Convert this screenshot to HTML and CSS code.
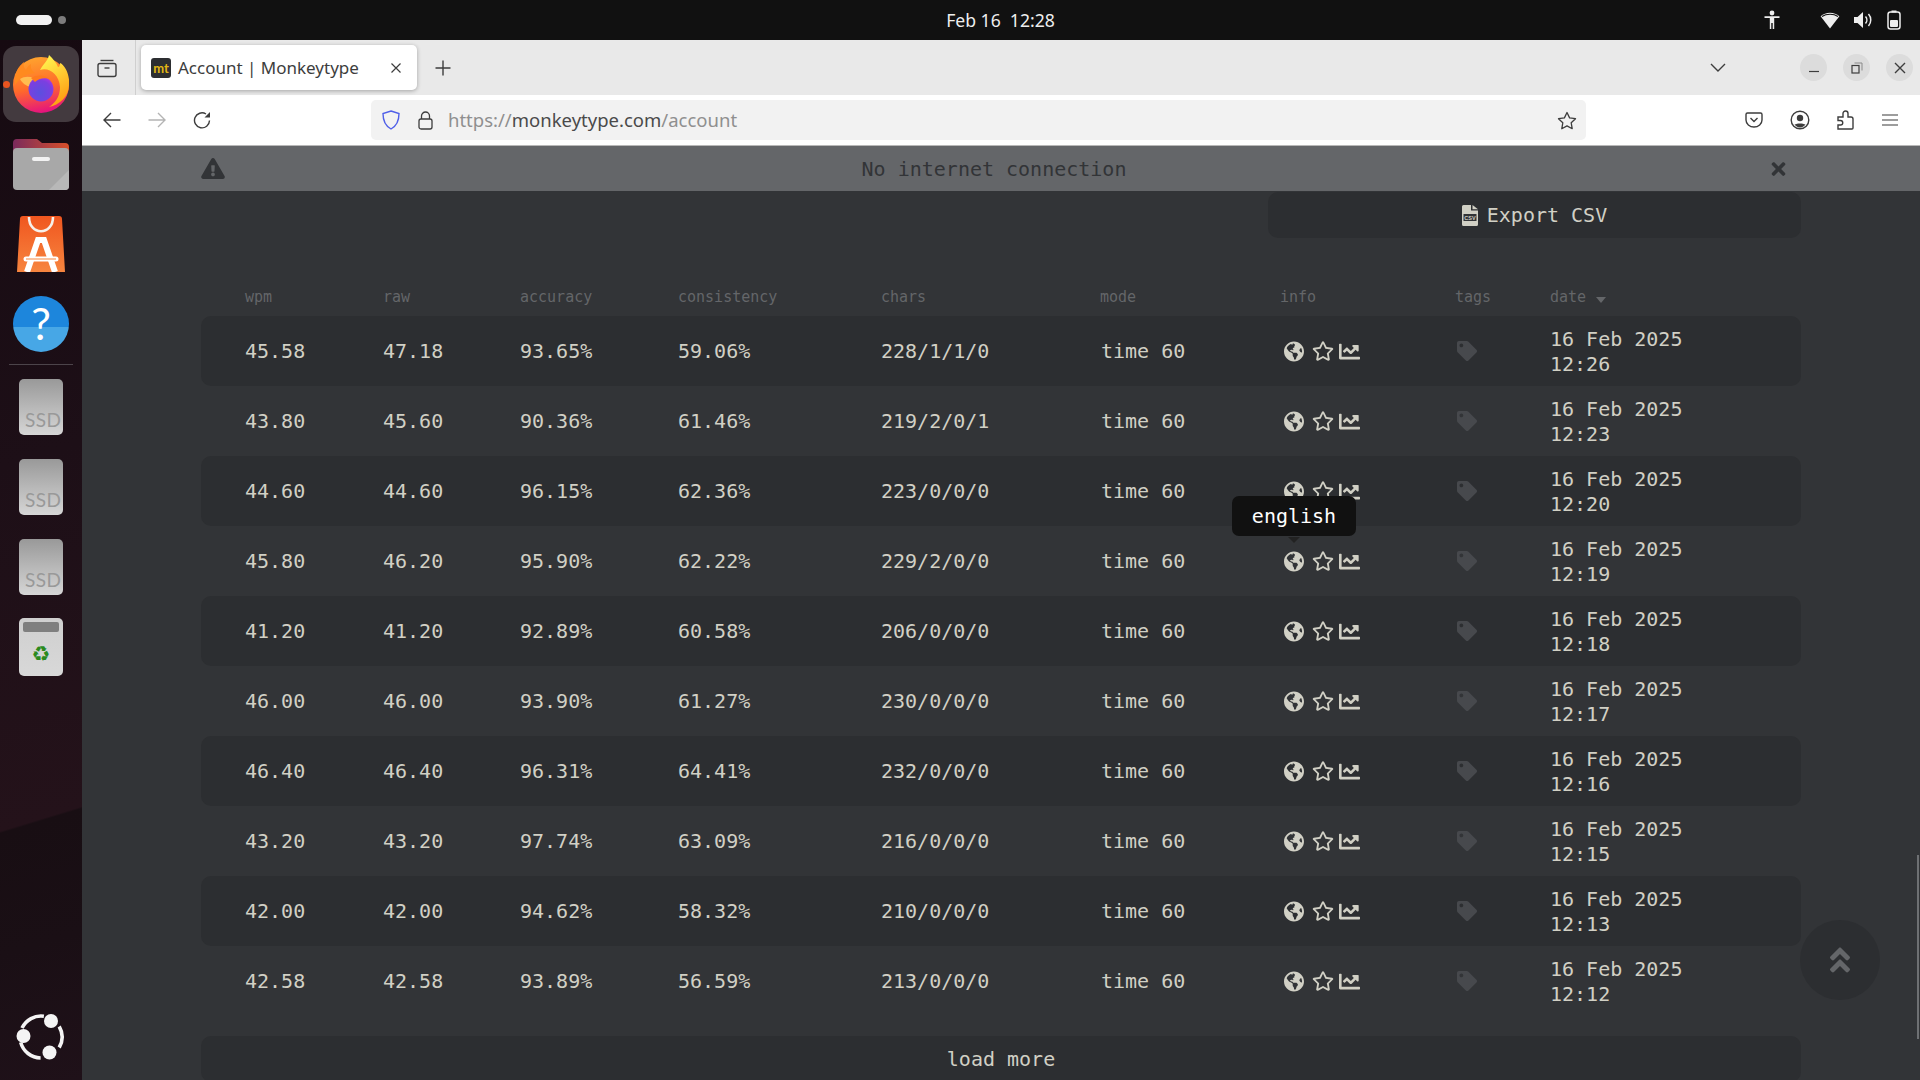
FILE: index.html
```html
<!DOCTYPE html>
<html lang="en">
<head>
<meta charset="utf-8">
<title>Account | Monkeytype</title>
<link rel="stylesheet" href="styles.css">
</head>
<body>
<svg class="defs" width="0" height="0" aria-hidden="true">
  <symbol id="globe" viewBox="0 0 496 512"><path d="M248 8C111.03 8 0 119.03 0 256s111.03 248 248 248 248-111.03 248-248S384.97 8 248 8zm82.29 357.6c-3.9 3.88-7.99 7.95-11.31 11.28-2.99 3-5.1 6.7-6.17 10.71-1.51 5.66-2.73 11.38-4.77 16.87l-17.39 46.85c-13.76 3-28 4.69-42.65 4.69v-27.38c1.69-12.62-7.64-36.26-22.63-51.25-6-6-9.37-14.14-9.37-22.63v-32.01c0-11.64-6.27-22.34-16.46-27.97-14.37-7.95-34.81-19.06-48.81-26.11-11.48-5.78-22.1-13.14-31.65-21.75l-.8-.72a114.792 114.792 0 0 1-18.06-20.74c-9.38-13.77-24.66-36.42-34.59-51.14 20.47-45.5 57.36-82.04 103.2-101.89l24.01 12.01C203.48 89.74 216 82.01 216 70.11v-11.3c7.99-1.29 16.12-2.11 24.39-2.42l28.3 28.3c6.25 6.25 6.25 16.38 0 22.63L264 112l-10.34 10.34c-3.12 3.12-3.12 8.19 0 11.31l4.69 4.69c3.12 3.12 3.12 8.19 0 11.31l-8 8a8.008 8.008 0 0 1-5.67 2.34h-8.99c-2.08 0-4.08.81-5.58 2.27l-9.92 9.65a8.008 8.008 0 0 0-1.58 9.31l15.59 31.19c2.66 5.32-1.21 11.58-7.15 11.58h-5.64c-1.93 0-3.79-.7-5.24-1.96l-9.28-8.06a16.017 16.017 0 0 0-15.55-3.1l-31.17 10.39a11.95 11.95 0 0 0-8.17 11.34c0 4.53 2.56 8.66 6.61 10.69l11.08 5.54c9.41 4.71 19.79 7.16 30.31 7.16s22.59 27.29 32 32h66.75c8.49 0 16.62 3.37 22.63 9.37l13.69 13.69a30.503 30.503 0 0 1 8.93 21.57 46.536 46.536 0 0 1-13.72 32.98zM417 274.25c-5.79-1.45-10.84-5-14.15-9.97l-17.98-26.97a23.97 23.97 0 0 1 0-26.62l19.59-29.38c2.32-3.47 5.5-6.29 9.24-8.15l12.98-6.49C440.2 193.59 448 223.87 448 256c0 8.67-.74 17.16-1.82 25.54L417 274.25z"/></symbol>
  <symbol id="star" viewBox="0 0 576 512"><path d="M528.1 171.5L382 150.2 316.7 17.8c-11.7-23.6-45.6-23.9-57.4 0L194 150.2 47.9 171.5c-26.2 3.8-36.7 36.1-17.7 54.6l105.7 103-25 145.5c-4.5 26.3 23.2 46 46.4 33.7L288 439.6l130.7 68.7c23.2 12.2 50.9-7.4 46.4-33.7l-25-145.5 105.7-103c19-18.5 8.5-50.8-17.7-54.6zM388.6 312.3l23.7 138.4L288 385.4l-124.3 65.3 23.7-138.4-100.6-98 139-20.2 62.2-126 62.2 126 139 20.2-100.6 98z"/></symbol>
  <symbol id="chart" viewBox="0 0 512 512"><path d="M496 384H64V80c0-8.84-7.16-16-16-16H16C7.16 64 0 71.16 0 80v336c0 17.67 14.33 32 32 32h464c8.84 0 16-7.16 16-16v-32c0-8.84-7.16-16-16-16zM464 96H345.94c-21.38 0-32.09 25.85-16.97 40.97l32.4 32.4L288 242.75l-73.37-73.37c-12.5-12.5-32.76-12.5-45.25 0l-68.69 68.69c-6.25 6.25-6.25 16.38 0 22.63l22.62 22.62c6.25 6.25 16.38 6.25 22.63 0L192 237.25l73.37 73.37c12.5 12.5 32.76 12.5 45.25 0l96-96 32.4 32.4c15.12 15.12 40.97 4.41 40.97-16.97V112c0-8.84-7.16-16-16-16z"/></symbol>
  <symbol id="tag" viewBox="0 0 512 512"><path d="M0 252.118V48C0 21.49 21.49 0 48 0h204.118a48 48 0 0 1 33.941 14.059l211.882 211.882c18.745 18.745 18.745 49.137 0 67.882L293.823 497.941c-18.745 18.745-49.137 18.745-67.882 0L14.059 286.059A48 48 0 0 1 0 252.118zM112 64c-26.51 0-48 21.49-48 48s21.49 48 48 48 48-21.49 48-48-21.49-48-48-48z"/></symbol>
</svg>

<header class="topbar">
  <div class="workspaces"><span class="ws-pill"></span><span class="ws-dot"></span></div>
  <div class="clock">Feb 16&nbsp; 12:28</div>
  <div class="tray">
    <svg class="tray-a11y" width="16" height="20" viewBox="0 0 16 20"><circle cx="8" cy="3" r="2.4" fill="#eee"/><path d="M0.5 6.2h15v1.8H10.2V19H8.7v-6H7.3v6H5.8V8H.5z" fill="#eee"/></svg>
    <svg class="tray-wifi" width="20" height="17" viewBox="0 0 20 17"><path d="M10 16.5L.6 4.2C3.2 2 6.4.8 10 .8s6.800 1.200 9.400 3.400z" fill="#eee"/><path d="M2 4.500C4.200 3 7 2.200 10 2.200s5.800.8 8 2.300" fill="none" stroke="#111" stroke-width="1.100"/></svg>
    <svg class="tray-vol" width="19" height="18" viewBox="0 0 19 18"><path d="M0 6h3.500L9 1v16l-5.500-5H0z" fill="#eee"/><path d="M11.500 5.500c1.800 2 1.800 5 0 7M14.500 3c3 3.400 3 8.600 0 12" fill="none" stroke="#eee" stroke-width="1.500"/></svg>
    <svg class="tray-bat" width="14" height="20" viewBox="0 0 14 20"><rect x="1" y="2" width="12" height="17" rx="2.500" fill="none" stroke="#eee" stroke-width="1.500"/><rect x="4.500" y=".5" width="5" height="2" fill="#eee"/><rect x="3" y="10" width="8" height="7" rx="1" fill="#eee"/></svg>
  </div>
</header>

<div class="desk">
  <nav class="dock">
    <div class="dock-slot">
      <span class="run-dot"></span>
      <div class="ff-tile">
        <svg width="56" height="58" viewBox="0 0 56 58">
          <defs>
            <linearGradient id="ffBase" x1="0.300" y1="0" x2="0.500" y2="1"><stop offset="0" stop-color="#ffa52e"/><stop offset=".55" stop-color="#ff6a2a"/><stop offset="1" stop-color="#e5127f"/></linearGradient>
            <linearGradient id="ffTail" x1="0.300" y1="0" x2="0.700" y2="1"><stop offset="0" stop-color="#fff44f"/><stop offset="1" stop-color="#ff980e"/></linearGradient>
            <radialGradient id="ffGlobe" cx=".45" cy=".65" r=".7"><stop offset="0" stop-color="#5b4fe0"/><stop offset=".7" stop-color="#7b3fe0"/><stop offset="1" stop-color="#b833e1"/></radialGradient>
          </defs>
          <circle cx="28" cy="30" r="28" fill="url(#ffBase)"/>
          <path d="M36 0C35 6 30 9 27 15 36 12 46 19 47 32 47 42 42 48 36 52 46 50 56 42 56 30 57 20 52 10 47 8 47 11 46 12 45 12 43 7 40 4 36 0Z" fill="url(#ffTail)"/>
          <path d="M2 22C3 15 7 10 11 7 10 11 11 13 13 15 14 12 16 10 18 9 17 13 19 16 22 18 14 19 8 21 2 30Z" fill="#ff8a1f"/>
          <path d="M7 24C13 20 22 22 27 27 27 31 23 33 18 32 13 31 9 28 7 24Z" fill="#ffbd4f"/>
          <circle cx="28" cy="34" r="12.500" fill="url(#ffGlobe)"/>
          <path d="M18 23C24 19 34 20 38 25 33 22 26 23 22 27Z" fill="#ff7a1e"/>
        </svg>
      </div>
    </div>
    <div class="dock-slot">
      <svg width="56" height="52" viewBox="0 0 56 52">
        <defs><linearGradient id="fold" x1="0" y1="0" x2="1" y2="0"><stop offset="0" stop-color="#7a2a5c"/><stop offset="1" stop-color="#d8502a"/></linearGradient></defs>
        <path d="M0 5a4 4 0 0 1 4-4h20l5 4h23a4 4 0 0 1 4 4v14H0z" fill="url(#fold)"/>
        <rect y="10" width="56" height="42" rx="4" fill="#a8a8a8"/>
        <path d="M56 32V48a4 4 0 0 1-4 4H36z" fill="#b8b8b8"/>
        <rect x="19" y="19" width="18" height="4" rx="2" fill="#f2f2f2"/>
      </svg>
    </div>
    <div class="dock-slot">
      <svg width="48" height="56" viewBox="0 0 48 56">
        <defs><linearGradient id="shop" x1="0" y1="0" x2="0" y2="1"><stop offset="0" stop-color="#f0561f"/><stop offset="1" stop-color="#f7853f"/></linearGradient></defs>
        <path d="M3 3a3 3 0 0 1 3-3h36a3 3 0 0 1 3 3l3 53H0z" fill="url(#shop)"/>
        <path d="M12 1c0 19 24 19 24 0" fill="none" stroke="#f6f0ea" stroke-width="2.600"/>
        <path d="M10 56L21 24h6L38 56" fill="none" stroke="#fff" stroke-width="6"/>
        <path d="M9 43h30" stroke="#fff" stroke-width="5" stroke-linecap="round"/>
        <path d="M9 43h30" stroke="#f7853f" stroke-width="1"/>
      </svg>
    </div>
    <div class="dock-slot"><div class="help">?</div></div>
    <div class="dock-sep"></div>
    <div class="dock-slot"><div class="ssd">SSD</div></div>
    <div class="dock-slot"><div class="ssd">SSD</div></div>
    <div class="dock-slot"><div class="ssd">SSD</div></div>
    <div class="dock-slot"><div class="trash"><span class="trash-bar"></span><span class="trash-mark">♻</span></div></div>
    <div class="dock-slot dock-last">
      <svg width="50" height="50" viewBox="0 0 50 50">
        <path d="M43.200 14.500A21 21 0 0 1 43.200 35.500M24.600 46A21 21 0 0 1 4.700 30.400M6 16.100A21 21 0 0 1 27.900 4.200" fill="none" stroke="#f4f4f4" stroke-width="3.600"/>
        <circle cx="35" cy="9" r="7" fill="#f4f4f4"/>
        <circle cx="7.500" cy="24" r="7" fill="#f4f4f4"/>
        <circle cx="33.500" cy="40.500" r="7" fill="#f4f4f4"/>
      </svg>
    </div>
  </nav>

  <div class="browser">
    <div class="tabbar">
      <svg class="ff-view" width="20" height="20" viewBox="0 0 20 20" fill="none" stroke="#3d3d3d" stroke-width="1.400"><path d="M3.500 2.500h13"/><rect x="1" y="5.500" width="18" height="13" rx="2"/><path d="M7.500 10h5"/></svg>
      <div class="tab-sep"></div>
      <div class="tab">
        <span class="favicon">mt</span>
        <span class="tab-title">Account | Monkeytype</span>
        <svg class="tab-close" width="10" height="10" viewBox="0 0 10 10"><path d="M.5.500l9 9M9.500.500l-9 9" stroke="#3d3d3d" stroke-width="1.200"/></svg>
      </div>
      <svg class="new-tab" width="16" height="16" viewBox="0 0 16 16"><path d="M8 .5v15M.5 8h15" stroke="#3d3d3d" stroke-width="1.400"/></svg>
      <svg class="tab-list" width="16" height="10" viewBox="0 0 16 10"><path d="M1 1l7 7 7-7" fill="none" stroke="#3d3d3d" stroke-width="1.400"/></svg>
      <div class="win-btns">
        <span class="win-btn"><svg width="12" height="12" viewBox="0 0 12 12"><path d="M1 9.500h10" stroke="#3d3d3d" stroke-width="1.200"/></svg></span>
        <span class="win-btn"><svg width="12" height="12" viewBox="0 0 12 12" fill="none"><rect x="1" y="3.500" width="7" height="7.500" stroke="#3d3d3d" stroke-width="1.200"/><path d="M3.500 1h7.500v7.500" stroke="#8a8a8a" stroke-width="1"/></svg></span>
        <span class="win-btn"><svg width="12" height="12" viewBox="0 0 12 12"><path d="M1 1l10 10M11 1L1 11" stroke="#3d3d3d" stroke-width="1.400"/></svg></span>
      </div>
    </div>

    <div class="navbar">
      <svg class="nav-back" width="18" height="16" viewBox="0 0 18 16" fill="none" stroke="#3d3d3d" stroke-width="1.400"><path d="M17.500 8H1M8 1L1 8l7 7"/></svg>
      <svg class="nav-fwd" width="18" height="16" viewBox="0 0 18 16" fill="none" stroke="#b4b4b4" stroke-width="1.400"><path d="M.5 8H17M10 1l7 7-7 7"/></svg>
      <svg class="nav-reload" width="18" height="18" viewBox="0 0 18 18" fill="none" stroke="#3d3d3d" stroke-width="1.400"><path d="M16.500 9.500A7.500 7.500 0 1 1 13 3"/><path d="M17 1v5.500h-5.500z" fill="#3d3d3d" stroke="none"/></svg>
      <div class="urlbar">
        <svg class="url-shield" width="18" height="20" viewBox="0 0 18 20" fill="none"><path d="M9 1l8 2.500c0 7-1.500 12-8 15.500C2.500 15.500 1 10.500 1 3.500z" stroke="#4f5fe8" stroke-width="1.400"/></svg>
        <svg class="url-lock" width="15" height="19" viewBox="0 0 15 19" fill="none" stroke="#3d3d3d" stroke-width="1.300"><rect x="1" y="8" width="13" height="10" rx="2"/><path d="M3.500 8V5a4 4 0 0 1 8 0v3"/></svg>
        <span class="url-text">https://<b class="url-host">monkeytype.com</b>/account</span>
        <svg class="url-star" width="20" height="19" viewBox="0 0 20 19"><path d="M10 1.500l2.600 5.400 5.900.8-4.300 4.100 1 5.900L10 14.900l-5.200 2.800 1-5.900L1.500 7.700l5.900-.8z" fill="none" stroke="#3d3d3d" stroke-width="1.300" stroke-linejoin="round"/></svg>
      </div>
      <div class="nav-tools">
        <svg width="18" height="16" viewBox="0 0 18 16" fill="none" stroke="#3d3d3d" stroke-width="1.400"><path d="M1 2.500A1.500 1.500 0 0 1 2.500 1h13A1.500 1.500 0 0 1 17 2.500V8a8 7 0 0 1-16 0z"/><path d="M5.500 6L9 9.500 12.500 6"/></svg>
        <svg width="20" height="20" viewBox="0 0 20 20" fill="none" stroke="#3d3d3d" stroke-width="1.400"><circle cx="10" cy="10" r="8.800"/><circle cx="10" cy="8" r="3.200" fill="#3d3d3d" stroke="none"/><path d="M4.500 14.500c3-1.500 8-1.500 11 0-1.500 2-3.500 3-5.500 3s-4-1-5.500-3z" fill="#3d3d3d" stroke="none"/></svg>
        <svg width="18" height="20" viewBox="0 0 18 20" fill="none" stroke="#3d3d3d" stroke-width="1.400"><path d="M1 7h5V3.500a2.500 2.500 0 0 1 5 0V7h3a2 2 0 0 1 2 2v9a1 1 0 0 1-1 1H1v-4h2.500a2 2 0 0 0 0-4.500H1z"/></svg>
        <svg width="16" height="12" viewBox="0 0 16 12"><path d="M0 1h16M0 6h16M0 11h16" stroke="#3d3d3d" stroke-width="1.200"/></svg>
      </div>
    </div>

    <div class="notice">
      <svg class="notice-warn" width="24" height="21" viewBox="0 0 576 512"><path d="M569.517 440.013C587.975 472.007 564.806 512 527.94 512H48.054c-36.937 0-59.999-40.055-41.577-71.987L246.423 23.985c18.467-32.009 64.72-31.951 83.154 0l239.94 416.028zM288 354c-25.405 0-46 20.595-46 46s20.595 46 46 46 46-20.595 46-46-20.595-46-46-46zm-43.673-165.346l7.418 136c.347 6.364 5.609 11.346 11.982 11.346h48.546c6.373 0 11.635-4.982 11.982-11.346l7.418-136c.375-6.874-5.098-12.654-11.982-12.654h-63.383c-6.884 0-12.356 5.78-11.981 12.654z"/></svg>
      <span class="notice-text">No internet connection</span>
      <svg class="notice-x" width="15" height="20" viewBox="0 0 352 512"><path d="M242.72 256l100.07-100.07c12.28-12.28 12.28-32.19 0-44.48l-22.24-22.24c-12.28-12.28-32.19-12.28-44.48 0L176 189.28 75.93 89.21c-12.28-12.28-32.19-12.28-44.48 0L9.21 111.45c-12.28 12.28-12.28 32.19 0 44.48L109.28 256 9.21 356.07c-12.28 12.28-12.28 32.19 0 44.48l22.24 22.24c12.28 12.28 32.2 12.28 44.48 0L176 322.72l100.07 100.07c12.28 12.28 32.2 12.28 44.48 0l22.24-22.24c12.28-12.28 12.28-32.19 0-44.48L242.72 256z"/></svg>
    </div>

    <main class="page">
      <div class="content">
        <div class="export-row">
          <button class="export">
            <svg class="csv-icon" width="16" height="21" viewBox="0 0 16 21"><path d="M0 1.500A1.500 1.500 0 0 1 1.500 0H9v5.500h7v14a1.500 1.500 0 0 1-1.500 1.500h-13A1.500 1.500 0 0 1 0 19.500z" fill="#d1d0c5"/><path d="M10.500 0L16 4.200h-5.500z" fill="#d1d0c5"/><rect x="1.500" y="9" width="13" height="7" fill="#323437"/><text class="csv-mark" x="8" y="14.800">CSV</text></svg>
            Export CSV
          </button>
        </div>

        <div class="grid-row head">
          <span>wpm</span><span>raw</span><span>accuracy</span><span>consistency</span><span>chars</span><span>mode</span><span>info</span><span>tags</span>
          <span>date <i class="caret"></i></span>
        </div>

        <div class="grid-row rec alt"><span>45.58</span><span>47.18</span><span>93.65%</span><span>59.06%</span><span>228/1/1/0</span><span class="mode">time 60</span>
          <span class="info"><svg class="i-globe"><use href="#globe"/></svg><svg class="i-star"><use href="#star"/></svg><svg class="i-chart"><use href="#chart"/></svg></span>
          <span class="tags"><svg class="i-tag"><use href="#tag"/></svg></span><span class="date">16 Feb 2025 12:26</span></div>
        <div class="grid-row rec"><span>43.80</span><span>45.60</span><span>90.36%</span><span>61.46%</span><span>219/2/0/1</span><span class="mode">time 60</span>
          <span class="info"><svg class="i-globe"><use href="#globe"/></svg><svg class="i-star"><use href="#star"/></svg><svg class="i-chart"><use href="#chart"/></svg></span>
          <span class="tags"><svg class="i-tag"><use href="#tag"/></svg></span><span class="date">16 Feb 2025 12:23</span></div>
        <div class="grid-row rec alt"><span>44.60</span><span>44.60</span><span>96.15%</span><span>62.36%</span><span>223/0/0/0</span><span class="mode">time 60</span>
          <span class="info"><svg class="i-globe"><use href="#globe"/></svg><svg class="i-star"><use href="#star"/></svg><svg class="i-chart"><use href="#chart"/></svg></span>
          <span class="tags"><svg class="i-tag"><use href="#tag"/></svg></span><span class="date">16 Feb 2025 12:20</span></div>
        <div class="grid-row rec"><span>45.80</span><span>46.20</span><span>95.90%</span><span>62.22%</span><span>229/2/0/0</span><span class="mode">time 60</span>
          <span class="info"><svg class="i-globe"><use href="#globe"/></svg><svg class="i-star"><use href="#star"/></svg><svg class="i-chart"><use href="#chart"/></svg><span class="tooltip">english</span></span>
          <span class="tags"><svg class="i-tag"><use href="#tag"/></svg></span><span class="date">16 Feb 2025 12:19</span></div>
        <div class="grid-row rec alt"><span>41.20</span><span>41.20</span><span>92.89%</span><span>60.58%</span><span>206/0/0/0</span><span class="mode">time 60</span>
          <span class="info"><svg class="i-globe"><use href="#globe"/></svg><svg class="i-star"><use href="#star"/></svg><svg class="i-chart"><use href="#chart"/></svg></span>
          <span class="tags"><svg class="i-tag"><use href="#tag"/></svg></span><span class="date">16 Feb 2025 12:18</span></div>
        <div class="grid-row rec"><span>46.00</span><span>46.00</span><span>93.90%</span><span>61.27%</span><span>230/0/0/0</span><span class="mode">time 60</span>
          <span class="info"><svg class="i-globe"><use href="#globe"/></svg><svg class="i-star"><use href="#star"/></svg><svg class="i-chart"><use href="#chart"/></svg></span>
          <span class="tags"><svg class="i-tag"><use href="#tag"/></svg></span><span class="date">16 Feb 2025 12:17</span></div>
        <div class="grid-row rec alt"><span>46.40</span><span>46.40</span><span>96.31%</span><span>64.41%</span><span>232/0/0/0</span><span class="mode">time 60</span>
          <span class="info"><svg class="i-globe"><use href="#globe"/></svg><svg class="i-star"><use href="#star"/></svg><svg class="i-chart"><use href="#chart"/></svg></span>
          <span class="tags"><svg class="i-tag"><use href="#tag"/></svg></span><span class="date">16 Feb 2025 12:16</span></div>
        <div class="grid-row rec"><span>43.20</span><span>43.20</span><span>97.74%</span><span>63.09%</span><span>216/0/0/0</span><span class="mode">time 60</span>
          <span class="info"><svg class="i-globe"><use href="#globe"/></svg><svg class="i-star"><use href="#star"/></svg><svg class="i-chart"><use href="#chart"/></svg></span>
          <span class="tags"><svg class="i-tag"><use href="#tag"/></svg></span><span class="date">16 Feb 2025 12:15</span></div>
        <div class="grid-row rec alt"><span>42.00</span><span>42.00</span><span>94.62%</span><span>58.32%</span><span>210/0/0/0</span><span class="mode">time 60</span>
          <span class="info"><svg class="i-globe"><use href="#globe"/></svg><svg class="i-star"><use href="#star"/></svg><svg class="i-chart"><use href="#chart"/></svg></span>
          <span class="tags"><svg class="i-tag"><use href="#tag"/></svg></span><span class="date">16 Feb 2025 12:13</span></div>
        <div class="grid-row rec"><span>42.58</span><span>42.58</span><span>93.89%</span><span>56.59%</span><span>213/0/0/0</span><span class="mode">time 60</span>
          <span class="info"><svg class="i-globe"><use href="#globe"/></svg><svg class="i-star"><use href="#star"/></svg><svg class="i-chart"><use href="#chart"/></svg></span>
          <span class="tags"><svg class="i-tag"><use href="#tag"/></svg></span><span class="date">16 Feb 2025 12:12</span></div>

        <button class="load-more">load more</button>
      </div>

      <div class="to-top"><svg width="26" height="32" viewBox="0 0 320 512"><path d="M177 255.700l136 136c9.400 9.400 9.400 24.600 0 33.900l-22.600 22.600c-9.400 9.400-24.600 9.400-33.900 0L160 351.900l-96.400 96.400c-9.400 9.400-24.600 9.400-33.900 0L7 425.700c-9.400-9.400-9.400-24.600 0-33.900l136-136c9.400-9.500 24.600-9.500 34-.1zm-34-192L7 199.700c-9.400 9.400-9.400 24.600 0 33.900l22.600 22.600c9.400 9.400 24.600 9.400 33.900 0l96.400-96.400 96.400 96.400c9.400 9.400 24.600 9.400 33.900 0l22.600-22.600c9.400-9.400 9.400-24.600 0-33.900l-136-136c-9.200-9.400-24.400-9.400-33.800 0z"/></svg></div>
      <div class="scroll-thumb"></div>
    </main>
  </div>
</div>
</body>
</html>
```

FILE: styles.css
```css
* { box-sizing: border-box; }
html, body { margin: 0; height: 100%; overflow: hidden; }
body {
  width: 1920px; height: 1080px;
  display: flex; flex-direction: column;
  font-family: "Noto Sans", sans-serif;
  background: #111;
}
.defs { position: absolute; }

/* top bar */
.topbar {
  height: 40px; flex: none; background: #111; color: #eee;
  display: grid; grid-template-columns: 1fr auto 1fr; align-items: center;
}
.workspaces { display: flex; align-items: center; gap: 6px; padding-left: 16px; }
.ws-pill { width: 36px; height: 10px; border-radius: 5px; background: #f2f2f2; }
.ws-dot { width: 8px; height: 8px; border-radius: 50%; background: #7d7d7d; }
.clock { font-size: 17.6px; margin-left: 81px; padding-bottom: 1px; }
.tray { display: flex; align-items: center; justify-content: flex-end; padding-right: 19px; }
.tray-a11y { margin-right: 40px; }
.tray-vol { margin: 0 14px 0 14px; }

.desk { flex: 1; display: flex; min-height: 0; }

/* dock */
.dock {
  width: 82px; flex: none; display: flex; flex-direction: column;
  padding-top: 4px;
  background: linear-gradient(163deg, #160a11 0%, #1d0f17 40%, #24121a 74.3%, #180e13 74.5%, #1a0f15 86%, #1f1119 100%);
}
.dock-slot { height: 80px; flex: none; display: flex; align-items: center; justify-content: center; position: relative; }
.dock-sep { height: 1px; margin: 0 9px 2px; background: #4c444a; flex: none; }
.dock-last { margin-top: auto; margin-bottom: 3px; }
.ff-tile { width: 76px; height: 76px; border-radius: 13px; background: #433a3f; display: flex; align-items: center; justify-content: center; }
.run-dot { position: absolute; left: 3px; top: 37px; width: 7px; height: 7px; border-radius: 50%; background: #e95420; z-index: 1; }
.help {
  width: 56px; height: 56px; border-radius: 50%;
  background: linear-gradient(#1d86dc 0, #1d86dc 55%, #47a7e6 55%, #47a7e6 100%);
  color: #fff; font-size: 44px; line-height: 54px; text-align: center; font-family: "Lato", sans-serif;
}
.ssd {
  width: 44px; height: 56px; border-radius: 5px;
  background: linear-gradient(#999, #d6d6d6);
  color: #999; font-size: 19px; line-height: 22px; padding: 30px 0 0 6px; overflow: hidden;
  font-family: "Lato", sans-serif; letter-spacing: .5px;
}
.trash {
  width: 44px; height: 58px; border-radius: 5px; padding: 4px;
  background: linear-gradient(#cfcfcf, #d8d8d8);
  display: flex; flex-direction: column; align-items: center;
}
.trash-bar { width: 36px; height: 10px; border-radius: 2px; background: #7f7f7f; }
.trash-mark { color: #2a8a1e; font-size: 21px; line-height: 26px; margin-top: 9px; font-family: "DejaVu Sans", sans-serif; }

/* browser */
.browser { flex: 1; min-width: 0; display: flex; flex-direction: column; }
.tabbar { height: 55px; flex: none; background: #e9e9e9; display: flex; align-items: center; position: relative; }
.ff-view { margin-left: 15px; }
.tab-sep { width: 1px; height: 55px; background: #cfcfcf; margin: 0 5px 0 18px; }
.tab {
  width: 276px; height: 45px; background: #fff; border-radius: 5px;
  box-shadow: 0 1px 4px rgba(0,0,0,.3);
  display: flex; align-items: center; padding: 0 16px 0 10px;
}
.favicon {
  width: 20px; height: 20px; border-radius: 3px; background: #2c2e31; color: #e2b714;
  font: 700 13px/20px "Lato", sans-serif; text-align: center; flex: none;
}
.tab-title { font-size: 17px; color: #3d3d3d; margin-left: 7px; flex: 1; white-space: nowrap; }
.new-tab { margin-left: 18px; }
.tab-list { margin-left: 1259px; }
.win-btns { display: flex; gap: 16px; margin-left: 74px; }
.win-btn { width: 27px; height: 27px; border-radius: 50%; background: #dcdcdc; display: flex; align-items: center; justify-content: center; }

.navbar { height: 51px; flex: none; background: #fff; border-bottom: 1px solid #b8b8b8; display: flex; align-items: center; }
.nav-back { margin-left: 21px; }
.nav-fwd { margin-left: 27px; }
.nav-reload { margin-left: 27px; }
.urlbar {
  width: 1215px; height: 40px; margin-left: 160px; background: #f2f2f2; border-radius: 5px;
  display: flex; align-items: center; padding: 0 9px 0 11px;
}
.url-lock { margin-left: 18px; }
.url-text { font-size: 18.5px; color: #8f8f8f; margin-left: 15px; flex: 1; white-space: nowrap; padding-bottom: 2px; }
.url-host { font-weight: 400; color: #4a4a4a; }
.nav-tools { display: flex; align-items: center; gap: 27px; margin-left: 159px; }

.notice {
  height: 45px; flex: none; background: #646669; color: #323437;
  display: flex; align-items: center; padding: 0 134px 0 119px;
  font: 400 20px/25px "DejaVu Sans Mono", monospace;
}
.notice svg { fill: #323437; flex: none; }
.notice-text { flex: 1; text-align: center; padding: 1px 8px 0 0; }

/* page */
.page {
  flex: 1; min-height: 0; position: relative; overflow: hidden;
  background: #323437; color: #d1d0c5;
  font: 400 20px/25px "DejaVu Sans Mono", monospace;
}
.content { width: 1600px; margin: 0 auto; padding-top: 1px; }
.export-row { display: flex; justify-content: flex-end; }
.export, .load-more {
  font: inherit; color: inherit; border: 0; background: #2c2e31; border-radius: 10px;
  height: 46px; display: flex; align-items: center; justify-content: center; gap: 9px;
}
.export { width: 533px; padding-top: 1px; }
.csv-mark { font: 700 5.5px "Liberation Sans", sans-serif; fill: #d1d0c5; text-anchor: middle; }
.load-more { width: 100%; margin-top: 20px; }

.grid-row {
  display: grid; align-items: center;
  grid-template-columns: 138px 137px 158px 203px 219px 180px 175px 95px 1fr;
  padding-left: 44px;
}
.head { height: 78px; padding-top: 39px; color: #646669; font-size: 15px; line-height: 18px; }
.rec { height: 70px; border-radius: 10px; padding-top: 1px; }
.rec.alt { background: #2c2e31; }
.mode { padding-left: 1px; }
.caret {
  display: inline-block; width: 0; height: 0; margin-left: 1px; vertical-align: -1px;
  border: 5px solid transparent; border-top: 6px solid #646669; border-bottom: 0;
}
.info { display: flex; align-items: center; padding-left: 4px; margin-top: -1px; position: relative; fill: #d1d0c5; }
.i-globe { width: 20px; height: 21px; }
.i-star { width: 22px; height: 20px; margin-left: 8px; }
.i-chart { width: 21px; height: 21px; margin-left: 5px; }
.tags { display: flex; padding-left: 2px; margin-top: -1px; }
.i-tag { width: 20px; height: 20px; fill: #47494d; }
.date { width: 150px; }

.tooltip {
  position: absolute; left: -48px; top: -55px; width: 124px; height: 40px;
  background: #111; color: #fff; border-radius: 7px; text-align: center; line-height: 40px;
}
.tooltip::after {
  content: ""; position: absolute; left: 56px; top: 41px;
  border: 6px solid transparent; border-top: 6px solid #222; border-bottom: 0;
}

.to-top {
  position: absolute; left: 1718px; top: 729px; width: 80px; height: 80px; border-radius: 50%;
  background: #2c2e31; display: flex; align-items: center; justify-content: center; fill: #646669;
}
.scroll-thumb { position: absolute; right: 1px; top: 664px; width: 2px; height: 184px; background: #6e7073; }
```
